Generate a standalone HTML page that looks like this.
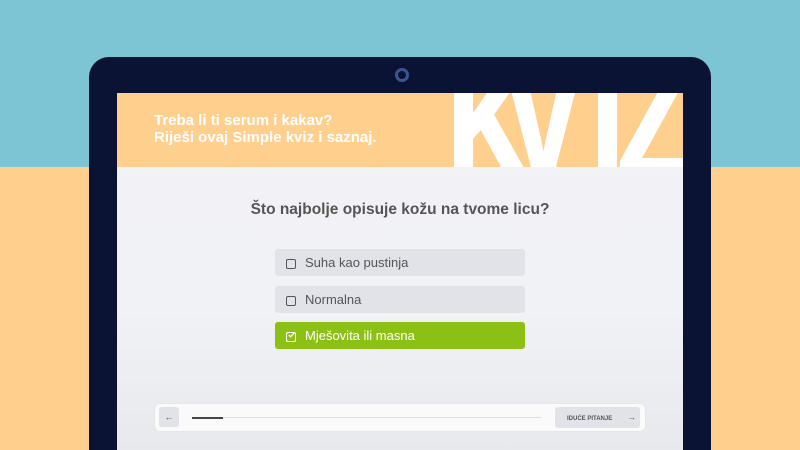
<!DOCTYPE html>
<html><head><style>
*{margin:0;padding:0;box-sizing:border-box}
html,body{width:800px;height:450px;overflow:hidden}
body{position:relative;background:#FFCF8E;font-family:"Liberation Sans",sans-serif}
.top{position:absolute;left:0;top:0;width:800px;height:167px;background:#7DC4D4}
.lap{position:absolute;left:89px;top:57px;width:622px;height:393px;background:#0B1334;border-radius:20px 20px 0 0}
.cam{position:absolute;left:395px;top:68px;width:14px;height:14px;border-radius:50%;border:3px solid #3A5494}
.scr{position:absolute;left:117px;top:93px;width:566px;height:357px;background:linear-gradient(#F2F3F6,#F1F2F5 60%,#E8E9ED);overflow:hidden}
.hdr{position:absolute;left:0;top:0;width:566px;height:74px;background:#FFCF8E;overflow:hidden}
.hdr p{position:absolute;left:37px;top:19px;color:#fff;font-weight:bold;font-size:15px;line-height:17px}
.big{position:absolute;left:331px;top:0;width:235px;height:74px;overflow:hidden}
.big span{position:absolute;color:#fff;-webkit-text-stroke:4px #fff;font-weight:bold;font-size:160px;line-height:1;top:-50px;transform:scaleX(.7);transform-origin:left top}
.q{position:absolute;top:108px;width:566px;text-align:center;font-weight:bold;font-size:15.5px;color:#555}
.o{position:absolute;left:158px;width:250px;height:27px;background:#E1E3E9;border-radius:3px;color:#555;font-size:13px;line-height:27px;padding-left:30px}
.o:before{content:"";position:absolute;left:11px;top:10px;width:8px;height:8px;border:1.3px solid #555;border-radius:2px}
.sel{background:#8DC014;color:#fff}
.sel:before{border-color:#fff}
.sel svg{position:absolute;left:13px;top:10px}
.bar{position:absolute;left:38px;top:311px;width:490px;height:27px;background:#fafafa;border-radius:5px;box-shadow:0 0 2px #ddd}
.bk{position:absolute;left:4px;top:3px;width:20px;height:20px;background:#E1E3E9;border-radius:3px;font-size:9px;text-align:center;line-height:20px;color:#555}
.ln{position:absolute;left:37px;top:13px;width:350px;height:1px;background:#ddd}
.ln i{position:absolute;left:0;top:-0.5px;width:31px;height:2px;background:#444}
.nx{position:absolute;left:400px;top:3px;width:85px;height:21px;background:#E1E3E9;border-radius:3px;font-size:6px;font-weight:bold;color:#555;line-height:21px;padding-left:12px}
</style></head><body>
<div class="top"></div>
<div class="lap"></div>
<div class="cam"></div>
<div class="scr">
 <div class="hdr"><p>Treba li ti serum i kakav?<br>Riješi ovaj Simple kviz i saznaj.</p>
  <div class="big"><span style="left:0px">K</span><span style="left:58px">V</span><span style="left:144px">I</span><span style="left:170px">Z</span></div></div>
 <div class="q">Što najbolje opisuje kožu na tvome licu?</div>
 <div class="o" style="top:156px">Suha kao pustinja</div>
 <div class="o" style="top:193px">Normalna</div>
 <div class="o sel" style="top:229px"><svg width="7" height="6" viewBox="0 0 7 6"><path d="M0.8 3 L2.6 4.8 L6.5 0.5" stroke="#fff" stroke-width="1.3" fill="none"/></svg>Mješovita ili masna</div>
 <div class="bar"><div class="bk">←</div><div class="ln"><i></i></div><div class="nx">IDUĆE PITANJE <span style="margin-left:14px;font-size:8px">→</span></div></div>
</div>
</body></html>
